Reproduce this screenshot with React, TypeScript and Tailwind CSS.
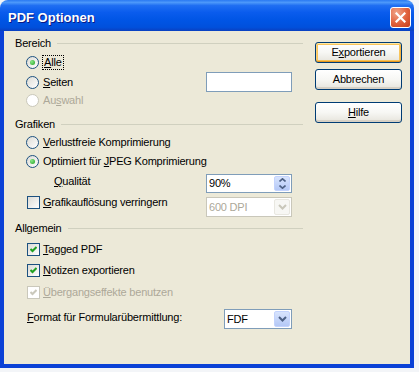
import React from 'react';

// Windows XP (Luna) styled "PDF Optionen" dialog

function Radio({ checked, disabled }: { checked?: boolean; disabled?: boolean }) {
  return (
    <span
      className={`flex h-[13px] w-[13px] shrink-0 items-center justify-center rounded-full border ${
        disabled
          ? 'border-[#cac8bb] bg-white'
          : 'border-[#1c5180] bg-gradient-to-br from-[#dcdbd5] to-white'
      }`}
    >
      {checked && (
        <span className="h-[5px] w-[5px] rounded-full bg-[radial-gradient(circle_at_35%_35%,#8ae889,#21a121)]" />
      )}
    </span>
  );
}

function Checkbox({ checked, disabled }: { checked?: boolean; disabled?: boolean }) {
  return (
    <span
      className={`flex h-[13px] w-[13px] shrink-0 items-center justify-center border ${
        disabled
          ? 'border-[#cac8bb] bg-white'
          : 'border-[#1c5180] bg-gradient-to-br from-[#dcdbd5] to-white'
      }`}
    >
      {checked && (
        <svg viewBox="0 0 7 7" className="h-[7px] w-[7px]">
          <path
            d="M0.5 3 L2.5 5 L6.5 1"
            fill="none"
            stroke={disabled ? '#cac8bb' : '#21a121'}
            strokeWidth="2"
          />
        </svg>
      )}
    </span>
  );
}

function GroupHeader({ label, className = '' }: { label: string; className?: string }) {
  return (
    <div className={`flex h-[14px] items-center gap-[6px] ${className}`}>
      <span>{label}</span>
      <div className="h-px flex-1 bg-[#d0d0bf]" />
    </div>
  );
}

function XpButton({
  children,
  isDefault,
  className = '',
}: {
  children: React.ReactNode;
  isDefault?: boolean;
  className?: string;
}) {
  return (
    <button
      className={`flex h-[21px] w-[87px] items-center justify-center rounded-[3px] border border-[#003c74] bg-gradient-to-b from-white via-[#f7f7f4] to-[#e6e4dc] text-[11px] text-black ${
        isDefault
          ? 'shadow-[inset_0_1px_0_#ffe9a6,inset_0_-1px_0_#e5971f,inset_1px_0_0_#fbd07a,inset_-1px_0_0_#f6b443,inset_0_0_0_2px_#f8c45a]'
          : 'shadow-[inset_0_-2px_0_#d6d0c5]'
      } ${className}`}
    >
      {children}
    </button>
  );
}

function Chevron({ color }: { color: string }) {
  return (
    <svg viewBox="0 0 9 6" className="h-[6px] w-[9px]">
      <path d="M1 1 L4.5 4.5 L8 1" fill="none" stroke={color} strokeWidth="2" />
    </svg>
  );
}

function Dropdown({
  value,
  disabled,
  className = '',
}: {
  value: string;
  disabled?: boolean;
  className?: string;
}) {
  return (
    <div
      className={`flex h-[20px] items-stretch border bg-white p-px ${
        disabled ? 'border-[#c9c7ba] text-[#aca899]' : 'border-[#7f9db9] text-black'
      } ${className}`}
    >
      <span className="flex flex-1 items-center pl-px">{value}</span>
      <span
        className={`flex w-[16px] items-center justify-center rounded-[2px] ${
          disabled
            ? 'bg-[#f7f7f4] border border-[#e8e7e0]'
            : 'border border-[#c3d3fd] bg-gradient-to-b from-[#d8e4fd] to-[#b4c8f6]'
        }`}
      >
        <Chevron color={disabled ? '#c9c7ba' : '#4d6185'} />
      </span>
    </div>
  );
}

function SpinField({ value }: { value: string }) {
  return (
    <div className="flex h-[19px] w-[86px] items-stretch border border-[#7f9db9] bg-white p-px">
      <span className="flex flex-1 items-center pl-px">{value}</span>
      <span className="flex w-[16px] flex-col overflow-hidden rounded-[2px] border border-[#c3d3fd] bg-gradient-to-b from-[#d8e4fd] to-[#b4c8f6]">
        <span className="flex flex-1 items-center justify-center">
          <svg viewBox="0 0 7 4" className="h-[4px] w-[7px]">
            <path d="M0.5 3.5 L3.5 0.8 L6.5 3.5" fill="none" stroke="#4d6185" strokeWidth="1.6" />
          </svg>
        </span>
        <span className="flex flex-1 items-center justify-center">
          <svg viewBox="0 0 7 4" className="h-[4px] w-[7px]">
            <path d="M0.5 0.5 L3.5 3.2 L6.5 0.5" fill="none" stroke="#4d6185" strokeWidth="1.6" />
          </svg>
        </span>
      </span>
    </div>
  );
}

function CloseButton() {
  return (
    <div className="flex h-[21px] w-[21px] items-center justify-center rounded-[3px] border border-white bg-[radial-gradient(circle_at_30%_25%,#f0a58a,#e0603c_55%,#c43d1b)]">
      <svg viewBox="0 0 11 11" className="h-[11px] w-[11px]">
        <path d="M1.5 1.5 L9.5 9.5 M9.5 1.5 L1.5 9.5" stroke="white" strokeWidth="2.2" strokeLinecap="square" />
      </svg>
    </div>
  );
}

export default function App() {
  return (
    <div className="h-[372px] w-[419px] bg-[#f3f5f8] font-['Liberation_Sans',Arial,sans-serif] text-[11px] tracking-[-0.2px] text-black">
      <div className="flex h-[368px] w-[414px] flex-col overflow-hidden rounded-t-[8px]">
        {/* Title bar */}
        <div className="flex h-[31px] shrink-0 items-center justify-between bg-[linear-gradient(to_bottom,#2a79f2_0%,#4c98fa_8%,#1f6ef2_18%,#0a5ced_40%,#0055e5_65%,#0050dc_88%,#0a3fc0_100%)] pl-[8px] pr-[3px] pt-[4px]">
          <span className="text-[13px] font-bold tracking-normal text-white [text-shadow:1px_1px_0_#0a1883]">
            PDF Optionen
          </span>
          <CloseButton />
        </div>

        {/* Client area */}
        <div className="flex flex-1 gap-[12px] border-x-4 border-b-4 border-[#0b41d6] bg-[#ece9d8] pl-[11px] pt-[5px]">
          {/* Left column */}
          <div className="flex w-[288px] flex-col">
            <GroupHeader label="Bereich" />
            <div className="mt-[3px] flex h-[19px] items-center gap-[3px] pl-[11px]">
              <Radio checked />
              <span className="border border-dotted border-black px-px leading-[13px]">
                <u>A</u>lle
              </span>
            </div>
            <div className="flex h-[20px] items-center justify-between pl-[11px] pr-[11px]">
              <div className="flex items-center gap-[4px]">
                <Radio />
                <span>
                  <u>S</u>eiten
                </span>
              </div>
              <div className="h-[20px] w-[86px] border border-[#7f9db9] bg-white" />
            </div>
            <div className="flex h-[17px] items-center gap-[4px] pl-[11px] text-[#aca899]">
              <Radio disabled />
              <span>
                Au<u>s</u>wahl
              </span>
            </div>

            <GroupHeader label="Grafiken" className="mt-[8px]" />
            <div className="mt-[2px] flex h-[19px] items-center gap-[4px] pl-[11px]">
              <Radio />
              <span>
                <u>V</u>erlustfreie Komprimierung
              </span>
            </div>
            <div className="flex h-[19px] items-center gap-[4px] pl-[11px]">
              <Radio checked />
              <span>
                Optimiert für <u>J</u>PEG Komprimierung
              </span>
            </div>
            <div className="mt-[3px] flex h-[19px] items-center justify-between pl-[39px] pr-[11px]">
              <span className="-mt-[4px]">
                <u>Q</u>ualität
              </span>
              <SpinField value="90%" />
            </div>
            <div className="mt-[3px] flex h-[21px] items-start justify-between pl-[12px] pr-[11px]">
              <div className="flex h-[13px] items-center gap-[3px]">
                <Checkbox />
                <span>
                  <u>G</u>rafikauflösung verringern
                </span>
              </div>
              <Dropdown value="600 DPI" disabled className="mt-px w-[86px]" />
            </div>

            <GroupHeader label="Allgemein" className="mt-[4px]" />
            <div className="mt-[5px] flex h-[19px] items-center gap-[3px] pl-[12px]">
              <Checkbox checked />
              <span>
                <u>T</u>agged PDF
              </span>
            </div>
            <div className="mt-[2px] flex h-[19px] items-center gap-[3px] pl-[12px]">
              <Checkbox checked />
              <span>
                <u>N</u>otizen exportieren
              </span>
            </div>
            <div className="mt-[3px] flex h-[19px] items-center gap-[3px] pl-[12px] text-[#aca899]">
              <Checkbox checked disabled />
              <span>
                <u>Ü</u>bergangseffekte benutzen
              </span>
            </div>
            <div className="mt-[7px] flex h-[20px] items-center justify-between pl-[12px] pr-[11px]">
              <span className="-mt-[4px]">
                <u>F</u>ormat für Formularübermittlung:
              </span>
              <Dropdown value="FDF" className="w-[68px]" />
            </div>
          </div>

          {/* Right column */}
          <div className="flex flex-col pt-[6px]">
            <XpButton isDefault>
              E<u>x</u>portieren
            </XpButton>
            <XpButton className="mt-[6px]">Abbrechen</XpButton>
            <XpButton className="mt-[12px]">
              <u>H</u>ilfe
            </XpButton>
          </div>
        </div>
      </div>
    </div>
  );
}
